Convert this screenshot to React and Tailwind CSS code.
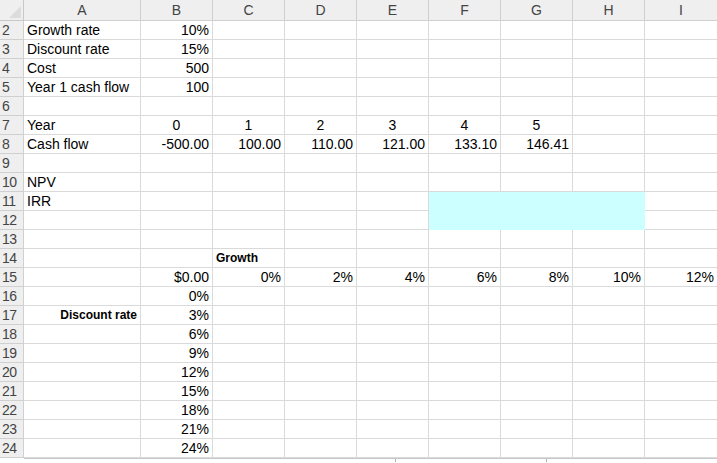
import React from 'react';

const COLS = ['A', 'B', 'C', 'D', 'E', 'F', 'G', 'H', 'I'];

// row number -> { col: [text, align, bold] }
const DATA = {
  2: { A: ['Growth rate'], B: ['10%', 'r'] },
  3: { A: ['Discount rate'], B: ['15%', 'r'] },
  4: { A: ['Cost'], B: ['500', 'r'] },
  5: { A: ['Year 1 cash flow'], B: ['100', 'r'] },
  7: { A: ['Year'], B: ['0', 'c'], C: ['1', 'c'], D: ['2', 'c'], E: ['3', 'c'], F: ['4', 'c'], G: ['5', 'c'] },
  8: { A: ['Cash flow'], B: ['-500.00', 'r'], C: ['100.00', 'r'], D: ['110.00', 'r'], E: ['121.00', 'r'], F: ['133.10', 'r'], G: ['146.41', 'r'] },
  10: { A: ['NPV'] },
  11: { A: ['IRR'] },
  14: { C: ['Growth', 'l', true] },
  15: { B: ['$0.00', 'r'], C: ['0%', 'r'], D: ['2%', 'r'], E: ['4%', 'r'], F: ['6%', 'r'], G: ['8%', 'r'], H: ['10%', 'r'], I: ['12%', 'r'] },
  16: { B: ['0%', 'r'] },
  17: { A: ['Discount rate', 'r', true], B: ['3%', 'r'] },
  18: { B: ['6%', 'r'] },
  19: { B: ['9%', 'r'] },
  20: { B: ['12%', 'r'] },
  21: { B: ['15%', 'r'] },
  22: { B: ['18%', 'r'] },
  23: { B: ['21%', 'r'] },
  24: { B: ['24%', 'r'] },
};

const ALIGN = { l: 'justify-start', r: 'justify-end', c: 'justify-center' };

function Cell({ row, col }) {
  const d = DATA[row]?.[col];
  const cyan = (row === 11 || row === 12) && ['F', 'G', 'H'].includes(col);
  const align = ALIGN[d?.[1] || 'l'];
  return (
    <div
      className={`flex items-center px-[3px] overflow-visible whitespace-nowrap border-b border-r ${
        cyan ? 'bg-[#ccffff] border-[#ccffff]' : 'border-[#dadada]'
      } ${align} ${d?.[2] ? 'font-bold text-[12px]' : 'text-[14px]'}`}
    >
      {d?.[0]}
    </div>
  );
}

export default function App() {
  const rows = Array.from({ length: 23 }, (_, i) => i + 2);
  return (
    <div
      className="w-[717px] h-[463px] overflow-hidden bg-white text-black"
      style={{ fontFamily: '"Liberation Sans", Arial, sans-serif' }}
    >
      <div className="grid grid-cols-[24px_117px_repeat(7,72px)_73px] grid-rows-[21px_repeat(23,19px)]">
        <div className="bg-[#efefef] border-b border-r border-[#c8c8c8] relative">
          <div className="absolute right-[2px] bottom-[2px] w-0 h-0 border-l-[12px] border-l-transparent border-b-[12px] border-b-[#dcdcdc]" />
        </div>
        {COLS.map((c) => (
          <div key={c} className="bg-[#efefef] border-b border-r border-[#d0d0d0] flex items-center justify-center text-[14px] text-[#444]">
            {c}
          </div>
        ))}
        {rows.map((r) => (
          <React.Fragment key={r}>
            <div className="bg-[#efefef] border-b border-r border-[#d0d0d0] flex items-center pl-[2px] text-[14px] text-[#444] tracking-[-0.5px]">
              {r}
            </div>
            {COLS.map((c) => (
              <Cell key={c} row={r} col={c} />
            ))}
          </React.Fragment>
        ))}
      </div>
      <div className="flex h-[4px] bg-white border-t border-[#c8c8c8] ml-[24px]">
        <div className="w-[372px] border-r border-[#b0b0b0]" />
        <div className="w-[150px]" />
        <div className="flex-1 border-l border-[#b0b0b0]" />
      </div>
    </div>
  );
}
